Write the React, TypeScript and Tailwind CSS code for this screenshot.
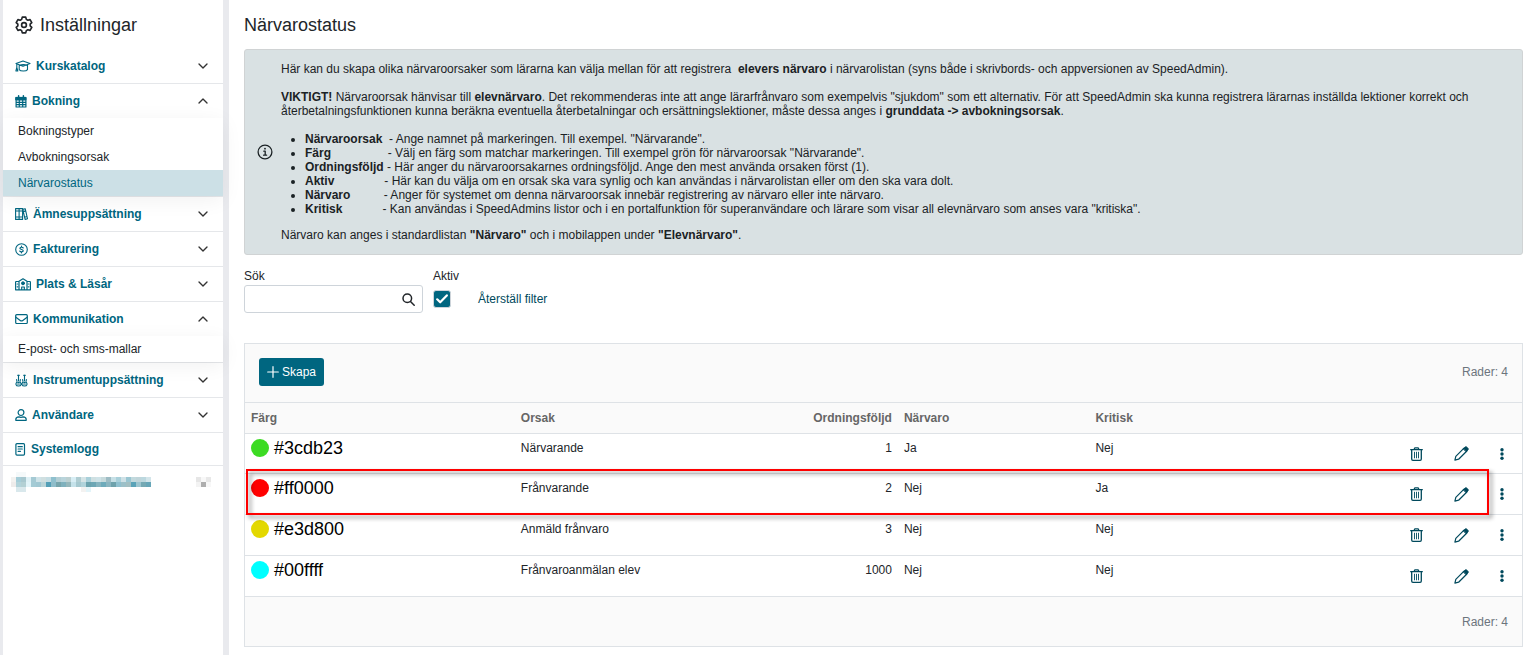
import { useState, type ReactNode } from "react";
import { LuChevronDown, LuChevronUp } from "react-icons/lu";

function Icon({ w = 12, h = 12, box, children }: { w?: number; h?: number; box: string; children: ReactNode }) {
  return (
    <svg width={w} height={h} viewBox={box} fill="none" stroke="currentColor" strokeLinecap="round" strokeLinejoin="round" className="shrink-0" aria-hidden="true">
      {children}
    </svg>
  );
}

const CapIcon = () => (
  <Icon w={16} h={12} box="0 0 16 12">
    <path d="M1 3.6 8 1l7 2.6-7 2.6z M4.200 5v4.600C5.400 11.500 11.300 11.500 12.500 9.600V5 M1.800 4v3.500 M1.800 7.500 .9 11h1.900z M4.200 5.500c2.500-1 5.800-1 8.300 0" strokeWidth="1.100" />
  </Icon>
);

const CalendarIcon = () => (
  <Icon w={12} h={13} box="0 0 11 13">
    <path d="M.6 2.600h9.800v9.400H.6z M3.800 5v7 M7.200 5v7 M.6 7.300h9.800 M.6 9.700h9.800" strokeWidth="1.200" />
    <path d="M.6 2.400h9.800V5H.6z" fill="currentColor" />
    <path d="M3.100.8v2 M7.900.8v2" strokeWidth="1.500" />
  </Icon>
);

const BooksIcon = () => (
  <Icon w={13} h={12} box="0 0 13 12">
    <path d="M.6.6h3.500v10.800H.6z M4.100.6h3.500v10.800H4.100z M.6 3h7 M.6 9h7 M7.800 1.400l2.400-.7 2.300 10-2.400.7z M8.300 3.600l2.400-.7 M9.600 9.200l2.400-.7" strokeWidth="1.100" />
  </Icon>
);

const CoinIcon = () => (
  <Icon w={13} h={13} box="0 0 13 13">
    <circle cx="6.500" cy="6.500" r="5.800" strokeWidth="1.100" />
    <path d="M8.200 4.900C7.600 4 5 4 4.900 5.300c0 1.500 3.300.9 3.300 2.400 0 1.300-2.700 1.400-3.400.4 M6.500 3.200v.9 M6.500 8.900v.9" strokeWidth="1.200" />
  </Icon>
);

const SchoolIcon = () => (
  <Icon w={16} h={13} box="0 0 16 13">
    <path d="M4 3.500H1.200a.6.6 0 0 0-.6.600v7.700h14.800V4.100a.6.6 0 0 0-.6-.6H12 M4 11.800V3.300L8 .8l4 2.500v8.500 M6.700 11.800V9h2.600v2.800 M2.200 6h.4 M2.200 8.800h.4 M13.400 6h.4 M13.400 8.800h.4" strokeWidth="1.200" />
    <circle cx="8" cy="5.300" r="1.500" fill="currentColor" />
  </Icon>
);

const MailIcon = () => (
  <Icon w={13} h={12} box="0 0 13 12">
    <rect x=".7" y="1.700" width="11.600" height="8.800" rx="1" strokeWidth="1.200" />
    <path d="M.9 4.200l4.300 3.200c.8.6 1.800.6 2.600 0l4.300-3.200" strokeWidth="1.200" />
  </Icon>
);

const InstrumentIcon = () => (
  <Icon w={13} h={13} box="0 0 13 13">
    <path d="M3.500 1v6 M9.500 1v6 M2.600 1.200h1.800 M8.600 1.200h1.800 M1.600 5.500c0 1.600.8 1.500.2 2.600-1.300 1.300-1.400 3.900 1.700 3.900s3-2.600 1.700-3.900c-.6-1 .2-1 .2-2.600 M7.600 5.500c0 1.600.8 1.500.2 2.600-1.300 1.300-1.300 3.900 1.700 3.900s3-2.600 1.700-3.900c-.6-1 .2-1 .2-2.600 M2.800 8.500h1.400 M2.600 10h1.800 M8.800 8.500h1.400 M8.600 10h1.800" strokeWidth="1.100" />
  </Icon>
);

const UserIcon = () => (
  <Icon w={12} h={12} box="0 0 11 12">
    <circle cx="5.500" cy="3.600" r="2.900" strokeWidth="1.200" />
    <path d="M3.400 7.900C1.600 8 .3 9 .3 10.400v.9h10.400v-.9c0-1.400-1.300-2.400-3.100-2.500-1.400.5-2.800.5-4.200 0z" strokeWidth="1.200" />
  </Icon>
);

const LogIcon = () => (
  <Icon w={11} h={13} box="0 0 11 13">
    <rect x=".9" y=".7" width="8.600" height="11.400" rx="1" strokeWidth="1.200" />
    <path d="M3.100 3.700h4.200 M3.100 6h4.200 M3.100 8.300h2.400" strokeWidth="1.200" />
  </Icon>
);

const GearIcon = () => (
  <Icon w={18} h={18} box="0 0 24 24">
    <path d="M9.700 1.500h4.600l.8 3 2 1.200 3-.9 2.300 4-2.200 2.100v2.200l2.200 2.100-2.300 4-3-.9-2 1.200-.8 3H9.700l-.8-3-2-1.200-3 .9-2.300-4 2.200-2.100v-2.200L1.600 8.800l2.300-4 3 .9 2-1.200z" strokeWidth="2.200" />
    <circle cx="12" cy="12" r="3.200" strokeWidth="2.200" />
  </Icon>
);

const InfoIcon = () => (
  <Icon w={16} h={16} box="0 0 16 16">
    <circle cx="8" cy="8" r="6.900" strokeWidth="1.300" />
    <path d="M6.800 7.200H8.200v4 M6.600 11.200h3" strokeWidth="1.300" />
    <circle cx="8" cy="4.700" r=".9" fill="currentColor" stroke="none" />
  </Icon>
);

const TrashIcon = () => (
  <Icon w={13} h={14} box="0 0 13 14">
    <path d="M.7 2.700h11.600 M4 2.500l.9-1.700h3.200L9 2.500 M1.700 2.900v9.200c0 .7.500 1.200 1.200 1.200h7.200c.7 0 1.200-.5 1.200-1.200V2.900" strokeWidth="1.300" />
    <path d="M4.500 5.200v5.700 M6.500 5.200v5.700 M8.500 5.200v5.700" strokeWidth=".9" />
  </Icon>
);

const PencilIcon = () => (
  <Icon w={15} h={15} box="0 0 15 15">
    <path d="M.9 14.100l.9-3.700 8.200-8.300 2.900 2.900-8.300 8.200z" strokeWidth="1.200" />
    <path d="M9.500 2.600l1.300-1.300c.7-.7 1.500-.7 2.200 0l.7.7c.7.7.7 1.500 0 2.200l-1.300 1.300z" fill="currentColor" strokeWidth="1" />
  </Icon>
);

const DotsIcon = () => (
  <Icon w={4} h={12} box="0 0 4 12">
    <g fill="currentColor" stroke="none">
      <circle cx="2" cy="1.700" r="1.700" />
      <circle cx="2" cy="6" r="1.700" />
      <circle cx="2" cy="10.300" r="1.700" />
    </g>
  </Icon>
);

type Item = { label: string; icon: ReactNode; open?: boolean; leaf?: boolean; children?: string[] };

const items: Item[] = [
  { label: "Kurskatalog", icon: <CapIcon /> },
  { label: "Bokning", icon: <CalendarIcon />, open: true, children: ["Bokningstyper", "Avbokningsorsak", "Närvarostatus"] },
  { label: "Ämnesuppsättning", icon: <BooksIcon /> },
  { label: "Fakturering", icon: <CoinIcon /> },
  { label: "Plats & Läsår", icon: <SchoolIcon /> },
  { label: "Kommunikation", icon: <MailIcon />, open: true, children: ["E-post- och sms-mallar"] },
  { label: "Instrumentuppsättning", icon: <InstrumentIcon /> },
  { label: "Användare", icon: <UserIcon /> },
  { label: "Systemlogg", icon: <LogIcon />, leaf: true },
];

const maskUpper = ["#f3f2f0", "#a5cdd8", "#a8c8cf", "#dff1f6", "#a5cad4", "#cfe3e8", "#d0dfe0", "#c5dde3", "#8fc0ce", "#b3ced4", "#b9d4db", "#bcd0d1", "#d8eef5", "#b0cdd2", "#d5e4e6", "#a9d0da", "#cfe0e2", "#cfe3e8", "#c7dadc", "#9dbcc4", "#c7e0e6", "#a9d0da", "#cfe1e6", "#9ac6d2", "#c2d9dd", "#c0d5da", "#bcd8df", "#d3e5ea"];
const maskLower = ["#eeeceb", "#b2d3da", "#b3d0d4", "#e2f4f9", "#a4cbd5", "#a1c8d3", "#b9d4d8", "#539fb7", "#8fbdca", "#77a5ac", "#7fb1bd", "#95b7bb", "#c5e2ea", "#a6c9d0", "#b0d3db", "#6ba3ae", "#6da7b5", "#86b4bf", "#6eabbb", "#8ab5c0", "#6ea2ac", "#8fc0cf", "#9cc0c8", "#a3bfc2", "#5aa3b8", "#9cc5cf", "#75a9b4", "#67a6b8"];

function MaskedRow() {
  return (
    <div className="flex h-8 items-center justify-between pr-3 pl-2">
      <svg width="140" height="20" viewBox="0 0 140 20" shapeRendering="crispEdges" aria-hidden="true">
        {maskUpper.map((c, i) => <rect key={i} x={i * 5} y="5" width="5" height="5" fill={c} />)}
        {maskLower.map((c, i) => <rect key={i} x={i * 5} y="10" width="5" height="5" fill={c} />)}
        <rect x="5" y="0" width="10" height="5" fill="#f5f9fa" />
        <rect x="5" y="15" width="10" height="5" fill="#d9e8ec" />
        <rect x="70" y="15" width="5" height="5" fill="#f3f2f1" />
        <rect x="75" y="15" width="5" height="5" fill="#e3f4f9" />
      </svg>
      <svg width="15" height="20" viewBox="0 0 15 20" shapeRendering="crispEdges" aria-hidden="true">
        <rect x="0" y="5" width="5" height="5" fill="#e6e6e6" />
        <rect x="5" y="5" width="5" height="5" fill="#f8f8f8" />
        <rect x="10" y="5" width="5" height="5" fill="#e8e8e8" />
        <rect x="0" y="10" width="5" height="5" fill="#f3f3f3" />
        <rect x="5" y="10" width="5" height="5" fill="#aeaeae" />
        <rect x="10" y="10" width="5" height="5" fill="#f7f7f7" />
      </svg>
    </div>
  );
}

function Sidebar() {
  return (
    <nav className="w-[229px] shrink-0 border-r-6 border-l-3 border-[#e9eaee] bg-white" aria-label="Inställningar">
      <h2 className="flex h-[49px] items-center gap-[7px] pl-3 text-lg text-[#212529]">
        <GearIcon />
        Inställningar
      </h2>
      <ul>
        {items.map((item) => (
          <li key={item.label} className="border-b border-[#e5e7ea]">
            <button type="button" aria-expanded={item.leaf ? undefined : !!item.open} className={`flex w-full items-center pr-3 pl-3 text-left text-xs font-bold text-[#006680] ${item.leaf ? "h-8" : "h-[34px]"}`}>
              {item.icon}
              <span className="ml-[5px] flex-1">{item.label}</span>
              {!item.leaf && (item.open ? <LuChevronUp size={16} className="text-[#333]" /> : <LuChevronDown size={16} className="text-[#333]" />)}
            </button>
            {item.children && (
              <ul className="relative bg-white shadow-[0_4px_20px_rgba(0,0,0,0.06)]">
                {item.children.map((c) => (
                  <li key={c}>
                    <a href="#" className={`flex h-[26px] items-center pl-[15px] text-xs ${c === "Närvarostatus" ? "bg-[#cce0e6] text-[#006680]" : "text-[#212529]"}`}>{c}</a>
                  </li>
                ))}
              </ul>
            )}
          </li>
        ))}
      </ul>
      <MaskedRow />
    </nav>
  );
}

const terms = [
  { name: "Närvaroorsak", pad: 2, text: "- Ange namnet på markeringen. Till exempel. \"Närvarande\"." },
  { name: "Färg", pad: 17, text: "- Välj en färg som matchar markeringen. Till exempel grön för närvaroorsak \"Närvarande\"." },
  { name: "Ordningsföljd", pad: 1, text: "- Här anger du närvaroorsakarnes ordningsföljd. Ange den mest använda orsaken först (1)." },
  { name: "Aktiv", pad: 15, text: "- Här kan du välja om en orsak ska vara synlig och kan användas i närvarolistan eller om den ska vara dolt." },
  { name: "Närvaro", pad: 10, text: "- Anger för systemet om denna närvaroorsak innebär registrering av närvaro eller inte närvaro." },
  { name: "Kritisk", pad: 12, text: "- Kan användas i SpeedAdmins listor och i en portalfunktion för superanvändare och lärare som visar all elevnärvaro som anses vara \"kritiska\"." },
];

function InfoBox() {
  return (
    <section className="flex items-center gap-2 rounded-[3px] border border-[#d0d3d4] bg-[#d9e1e3] py-3 pr-9 pl-3 text-xs leading-[14px] text-[#1b2225]">
      <InfoIcon />
      <div className="min-w-0 flex-1">
        <p className="mb-3.5">Här kan du skapa olika närvaroorsaker som lärarna kan välja mellan för att registrera&nbsp; <b>elevers närvaro</b> i närvarolistan (syns både i skrivbords- och appversionen av SpeedAdmin).</p>
        <p className="mb-3.5"><b>VIKTIGT!</b> Närvaroorsak hänvisar till <b>elevnärvaro</b>. Det rekommenderas inte att ange lärarfrånvaro som exempelvis "sjukdom" som ett alternativ. För att SpeedAdmin ska kunna registrera lärarnas inställda lektioner korrekt och återbetalningsfunktionen kunna beräkna eventuella återbetalningar och ersättningslektioner, måste dessa anges i <b>grunddata -&gt; avbokningsorsak</b>.</p>
        <ul className="mb-3 list-disc pl-6">
          {terms.map((t) => (
            <li key={t.name}><b>{t.name}</b>{"\u00a0".repeat(t.pad)}{t.text}</li>
          ))}
        </ul>
        <p>Närvaro kan anges i standardlistan <b>"Närvaro"</b> och i mobilappen under <b>"Elevnärvaro"</b>.</p>
      </div>
    </section>
  );
}

function Filters() {
  const [active, setActive] = useState(true);
  return (
    <form className="mt-3 flex gap-2.5 text-xs text-[#212529]">
      <div className="w-[179px]">
        <label htmlFor="search" className="block h-[18px] leading-[18px]">Sök</label>
        <div className="relative">
          <input id="search" type="text" className="block h-7 w-full rounded-[3px] border border-[#ced4da] bg-white pr-7 pl-2" />
          <svg className="absolute top-2 right-2 text-[#212529]" width="13" height="13" viewBox="0 0 13 13" fill="none" stroke="currentColor" strokeWidth="1.500" strokeLinecap="round" aria-hidden="true">
            <circle cx="5.300" cy="5.300" r="4.300" />
            <path d="M8.500 8.500l3.700 3.700" />
          </svg>
        </div>
      </div>
      <div>
        <label htmlFor="active" className="block h-[18px] leading-[18px]">Aktiv</label>
        <div className="grid h-7 w-[18px] place-items-center">
          <input id="active" type="checkbox" checked={active} onChange={(e) => setActive(e.target.checked)} className="peer col-start-1 row-start-1 size-[18px] appearance-none rounded-[3px] border border-[#ced4da] bg-white checked:bg-[#006680]" />
          <svg className="pointer-events-none invisible col-start-1 row-start-1 peer-checked:visible" width="12" height="10" viewBox="0 0 12 10" fill="none" stroke="#fff" strokeWidth="2.200" strokeLinecap="round" strokeLinejoin="round" aria-hidden="true">
            <path d="M1.200 5.300l3 3L10.800 1.400" />
          </svg>
        </div>
      </div>
      <button type="reset" className="mt-[18px] ml-[9px] h-7 text-[#00495c]">Återställ filter</button>
    </form>
  );
}

const rows = [
  { color: "#3cdb23", reason: "Närvarande", order: 1, presence: "Ja", critical: "Nej" },
  { color: "#ff0000", reason: "Frånvarande", order: 2, presence: "Nej", critical: "Ja", marked: true },
  { color: "#e3d800", reason: "Anmäld frånvaro", order: 3, presence: "Nej", critical: "Nej" },
  { color: "#00ffff", reason: "Frånvaroanmälan elev", order: 1000, presence: "Nej", critical: "Nej" },
];

function Grid() {
  return (
    <section className="mt-[30px] border border-[#dee2e6] bg-[#fafafa] text-xs text-[#212529]">
      <div className="flex items-center justify-between px-3.5 pt-3.5 pb-4">
        <button type="button" className="flex h-7 items-center gap-[3px] rounded-[3px] bg-[#006680] px-2 font-medium text-white">
          <Icon w={12} h={12} box="0 0 12 12"><path d="M6 .7v10.600 M.7 6h10.600" strokeWidth="1.200" /></Icon>
          Skapa
        </button>
        <span className="text-[#6c757d]">Rader: 4</span>
      </div>
      <table className="w-full table-fixed border-collapse">
        <colgroup>
          <col />
          <col className="w-[15%]" />
          <col className="w-[15%]" />
          <col className="w-[15%]" />
          <col className="w-[15%]" />
          <col className="w-[241px]" />
        </colgroup>
        <thead>
          <tr className="h-[31px] border-y border-[#dee2e6] text-left text-[#666]">
            <th className="px-1.5">Färg</th>
            <th className="px-1.5">Orsak</th>
            <th className="px-1.5 text-right">Ordningsföljd</th>
            <th className="px-1.5">Närvaro</th>
            <th className="px-1.5">Kritisk</th>
            <th aria-label="Åtgärder" />
          </tr>
        </thead>
        <tbody>
          {rows.map((r) => (
            <tr key={r.color} className="relative h-[41px] border-b border-[#dee2e6] bg-white align-top first:h-10">
              <td className="px-1.5 pt-[5px]">
                <span className="flex items-center gap-[5px] text-lg leading-[18px] text-black">
                  <span className="size-[18px] rounded-full" style={{ backgroundColor: r.color }} />
                  {r.color}
                </span>
              </td>
              <td className="px-1.5 pt-1.5">{r.reason}</td>
              <td className="px-1.5 pt-1.5 text-right">{r.order}</td>
              <td className="px-1.5 pt-1.5">{r.presence}</td>
              <td className="px-1.5 pt-1.5">{r.critical}</td>
              <td className="align-middle">
                <div className="flex items-center justify-end pr-[18px] text-[#00495c]">
                  <button type="button" aria-label="Ta bort"><TrashIcon /></button>
                  <button type="button" aria-label="Redigera" className="ml-[31px]"><PencilIcon /></button>
                  <button type="button" aria-label="Mer" className="ml-[31px]"><DotsIcon /></button>
                </div>
                {r.marked && (
                  <div className="pointer-events-none absolute -top-[5px] right-[33px] -bottom-px left-px z-10 border-2 border-[#fe0000] drop-shadow-[3px_3px_2px_rgba(0,0,0,0.45)]" />
                )}
              </td>
            </tr>
          ))}
        </tbody>
      </table>
      <div className="flex h-[49px] items-center justify-end px-3.5 text-[#6c757d]">Rader: 4</div>
    </section>
  );
}

export default function App() {
  return (
    <div className="flex min-h-screen bg-white font-['Liberation_Sans',Arial,sans-serif]">
      <Sidebar />
      <main className="min-w-0 flex-1 pr-2.5 pb-2 pl-[15px]">
        <h1 className="flex h-[49px] items-center text-lg text-[#212529]">Närvarostatus</h1>
        <InfoBox />
        <Filters />
        <Grid />
      </main>
    </div>
  );
}
